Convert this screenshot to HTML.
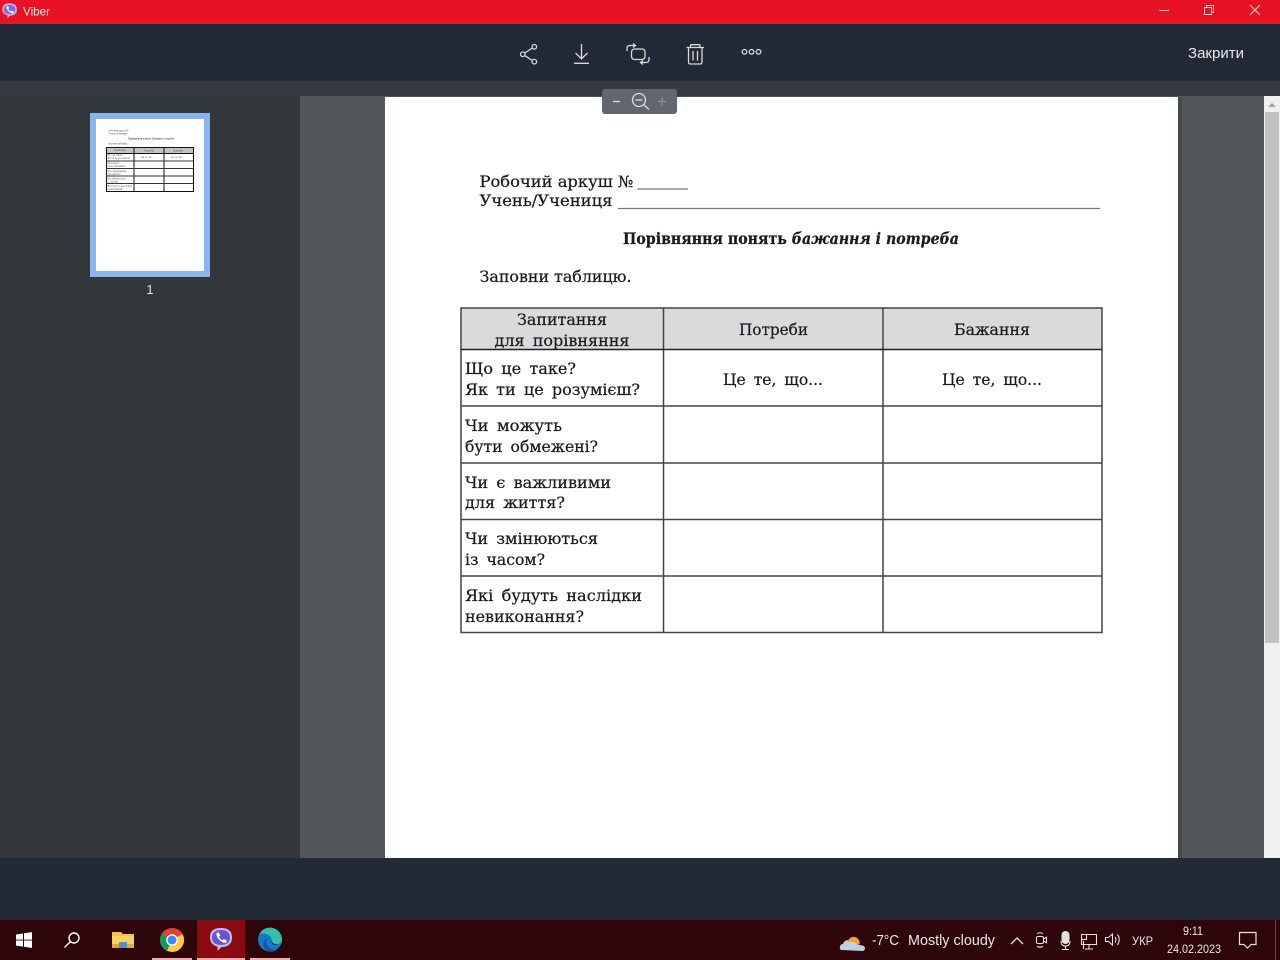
<!DOCTYPE html>
<html lang="uk"><head><meta charset="utf-8"><title>Viber</title>
<style>
html,body{margin:0;padding:0;background:#222a37;width:1280px;height:960px;overflow:hidden}
svg{display:block;position:absolute;left:0;top:0}
.d{font-family:"DejaVu Serif","Liberation Serif",serif;font-size:15.5px;fill:#1a1a1c;stroke:#1a1a1c;stroke-width:.22px}
.t{word-spacing:3px}
.m{font-family:"DejaVu Serif","Liberation Serif",serif;font-size:3px;fill:#555}
.u{font-family:"Liberation Sans",sans-serif;fill:#e8e8e8}
</style></head><body>
<svg width="1280" height="960" viewBox="0 0 1280 960" xmlns="http://www.w3.org/2000/svg">
<!-- backgrounds -->
<rect width="1280" height="960" fill="#222a37"/>
<rect width="1280" height="23" fill="#e81224"/>
<rect y="22" width="1280" height="2" fill="#c92433"/>
<rect y="81" width="1280" height="16" fill="#34393d"/>
<rect y="96" width="300" height="762" fill="#33373b"/>
<rect x="300" y="96" width="964" height="762" fill="#52575a"/>
<rect x="1178" y="97" width="4" height="761" fill="#464a4d"/>
<rect x="385" y="97" width="793" height="761" fill="#fff"/>
<rect x="1264" y="96" width="16" height="762" fill="#f0f0f0"/>
<rect x="1265" y="112" width="14" height="531" fill="#c2c2c2"/>
<path d="M1268 107l4-4 4 4z" fill="#a5a5a5"/>
<rect y="920" width="1280" height="40" fill="#2e0609"/>

<!-- title bar -->
<path d="M9.500 3.200c4.200 0 7.400 1.700 7.400 6.400 0 4.200-2.900 6-6.800 6l-2.600 2.600v-2.900c-3-.8-5.200-2.400-5.200-5.700 0-4.700 3-6.400 7.200-6.400z" fill="#c4b2f7"/>
<path d="M9.500 5c3.300 0 5.700 1.200 5.700 4.600 0 3.300-2.300 4.500-5.700 4.500-3.300 0-5.700-1.200-5.700-4.500 0-3.400 2.400-4.600 5.700-4.600z" fill="#8069db"/>
<path d="M6.500 6.500l1.500-.5 1.200 2-1 1c.6 1.300 1.300 2 2.600 2.600l1-1 2 1.200-.5 1.500c-3.300.4-7.200-3.500-6.800-6.800z" fill="#fff"/>
<text class="u" x="23" y="15.500" font-size="12" textLength="27" lengthAdjust="spacingAndGlyphs" fill="#f8dfe1">Viber</text>
<g stroke="#f6d5d8" fill="none" stroke-width="1">
<path d="M1159 10.500h10"/>
<path d="M1204.500 7.500h7v7h-7zM1206.500 7.500v-2h7v7h-2"/>
<path d="M1250 5l10 10M1260 5l-10 10"/>
</g>

<!-- toolbar icons -->
<g fill="none" stroke="#d8dadd" stroke-width="1.300">
<circle cx="534.300" cy="46.800" r="2.300"/><circle cx="522.800" cy="54.300" r="2.300"/><circle cx="534.300" cy="61.700" r="2.300"/>
<path d="M524.800 53l7.500-5M524.800 55.600l7.500 5"/>
<path d="M581.500 44v14.500M575.500 53l6 5.800 6-5.800M574 63.300h15"/>
<rect x="631.500" y="49" width="13.500" height="10.500" rx="3"/>
<path d="M627 51v-2.500q0-3 3-3h5M633 43.500l2.500 2-2.500 2M649 57v2.500q0 3-3 3h-5M643 60.500l-2.500 2 2.500 2"/>
<path d="M686.500 47.500h17.500M690.500 47.500v-1.800q0-1 1-1h7.500q1 0 1 1v1.800M688.500 48v14q0 2 2 2h9.500q2 0 2-2v-14M693 51v9.500M697.500 51v9.500"/>
<circle cx="744.500" cy="51.800" r="2.300"/><circle cx="751.500" cy="51.800" r="2.300"/><circle cx="758.500" cy="51.800" r="2.300"/>
</g>
<text class="u" x="1188" y="58" font-size="15" textLength="56" lengthAdjust="spacingAndGlyphs" fill="#d5d8dc">Закрити</text>

<!-- thumbnail -->
<rect x="90" y="113" width="120" height="164" fill="#8ab4f0"/>
<rect x="96" y="119" width="108" height="152" fill="#fff"/>
<rect x="107" y="148" width="86" height="5" fill="#c4c4c4"/>
<g class="m">
<text x="108.500" y="131.500" textLength="20" lengthAdjust="spacingAndGlyphs">Робочий аркуш №</text>
<text x="108.500" y="134.500" textLength="19" lengthAdjust="spacingAndGlyphs">Учень/Учениця</text>
<text x="128" y="139.500" textLength="46" lengthAdjust="spacingAndGlyphs" font-weight="bold">Порівняння понять бажання і потреба</text>
<text x="108" y="144.500" textLength="20" lengthAdjust="spacingAndGlyphs">Заповни таблицю.</text>
<text x="114" y="151" textLength="12" lengthAdjust="spacingAndGlyphs">Запитання</text>
<text x="144" y="151.500" textLength="10" lengthAdjust="spacingAndGlyphs">Потреби</text>
<text x="173" y="151.500" textLength="10" lengthAdjust="spacingAndGlyphs">Бажання</text>
<text x="107.500" y="156" textLength="15" lengthAdjust="spacingAndGlyphs">Що це таке?</text>
<text x="107.500" y="159" textLength="23" lengthAdjust="spacingAndGlyphs">Як ти це розумієш?</text>
<text x="141" y="158" textLength="13" lengthAdjust="spacingAndGlyphs">Це те, що...</text>
<text x="171" y="158" textLength="13" lengthAdjust="spacingAndGlyphs">Це те, що...</text>
<text x="107.500" y="164" textLength="12" lengthAdjust="spacingAndGlyphs">Чи можуть</text>
<text x="107.500" y="167" textLength="18" lengthAdjust="spacingAndGlyphs">бути обмежені?</text>
<text x="107.500" y="172" textLength="19" lengthAdjust="spacingAndGlyphs">Чи є важливими</text>
<text x="107.500" y="175" textLength="13" lengthAdjust="spacingAndGlyphs">для життя?</text>
<text x="107.500" y="179.500" textLength="18" lengthAdjust="spacingAndGlyphs">Чи змінюються</text>
<text x="107.500" y="182.500" textLength="11" lengthAdjust="spacingAndGlyphs">із часом?</text>
<text x="107.500" y="187" textLength="24" lengthAdjust="spacingAndGlyphs">Які будуть наслідки</text>
<text x="107.500" y="190" textLength="16" lengthAdjust="spacingAndGlyphs">невиконання?</text>
</g>
<g stroke="#111" fill="none" stroke-width="1">
<rect x="106.500" y="147.500" width="87" height="44"/>
<path d="M134 147.500v44M164 147.500v44M106.500 153.500h87"/>
<path d="M106.500 161h87M106.500 168.500h87M106.500 176h87M106.500 183.500h87" stroke="#333"/>
</g>
<text class="u" x="150" y="294" font-size="13" text-anchor="middle" fill="#fff">1</text>

<!-- document -->
<rect x="461" y="308" width="641" height="41" fill="#d9dadc"/>
<g class="d">
<text x="479.500" y="187" textLength="154" lengthAdjust="spacingAndGlyphs">Робочий аркуш №</text>
<text x="479.500" y="206" textLength="133" lengthAdjust="spacingAndGlyphs">Учень/Учениця</text>
<text x="623" y="244" textLength="336" lengthAdjust="spacingAndGlyphs" font-weight="bold">Порівняння понять <tspan font-style="italic">бажання і потреба</tspan></text>
<text x="479.500" y="282" textLength="152" lengthAdjust="spacingAndGlyphs">Заповни таблицю.</text>
</g>
<g class="d t">
<text x="517" y="325" textLength="90" lengthAdjust="spacingAndGlyphs">Запитання</text>
<text x="494.500" y="346" textLength="135" lengthAdjust="spacingAndGlyphs">для порівняння</text>
<text x="739" y="335" textLength="69" lengthAdjust="spacingAndGlyphs">Потреби</text>
<text x="954" y="335" textLength="76" lengthAdjust="spacingAndGlyphs">Бажання</text>
<text x="465" y="374" textLength="111" lengthAdjust="spacingAndGlyphs">Що це таке?</text>
<text x="465" y="395" textLength="175" lengthAdjust="spacingAndGlyphs">Як ти це розумієш?</text>
<text x="723" y="385" textLength="100" lengthAdjust="spacingAndGlyphs">Це те, що...</text>
<text x="942" y="385" textLength="100" lengthAdjust="spacingAndGlyphs">Це те, що...</text>
<text x="465" y="431" textLength="97" lengthAdjust="spacingAndGlyphs">Чи можуть</text>
<text x="465" y="452" textLength="133" lengthAdjust="spacingAndGlyphs">бути обмежені?</text>
<text x="465" y="488" textLength="146" lengthAdjust="spacingAndGlyphs">Чи є важливими</text>
<text x="465" y="508" textLength="100" lengthAdjust="spacingAndGlyphs">для життя?</text>
<text x="465" y="544" textLength="133" lengthAdjust="spacingAndGlyphs">Чи змінюються</text>
<text x="465" y="565" textLength="80" lengthAdjust="spacingAndGlyphs">із часом?</text>
<text x="465" y="601" textLength="177" lengthAdjust="spacingAndGlyphs">Які будуть наслідки</text>
<text x="465" y="622" textLength="119" lengthAdjust="spacingAndGlyphs">невиконання?</text>
</g>
<path d="M637.500 189h50.500M618 208.500h482" stroke="#777" stroke-width="1.300" fill="none"/>
<g fill="none" stroke="#444" stroke-width="1.500">
<rect x="461" y="308" width="641" height="324.500"/>
<path d="M663.500 308v324.500M883 308v324.500"/>
<path d="M461 406h641M461 463h641M461 519.500h641M461 576h641"/>
<path d="M461 349.500h641" stroke="#222"/>
</g>

<!-- zoom control -->
<rect x="602" y="89" width="75" height="25" rx="3" fill="#62676f"/>
<g fill="none" stroke="#dcdde0" stroke-width="1.300">
<path d="M613 101.500h7"/>
<circle cx="639" cy="100" r="6.500"/><path d="M635.500 100h7M644 105l5 4.500"/>
<path d="M658 101.500h8M662 97.500v8" stroke="#8b8f96"/>
</g>

<!-- taskbar -->
<g fill="#fff">
<path d="M16 934.500l7-1v6.100h-7zM24 933.300l8-1.200v7.500h-8zM16 940.500h7v6.100l-7-1zM24 940.500h8v7.500l-8-1.200z"/>
</g>
<g fill="none" stroke="#fff" stroke-width="1.400"><circle cx="74" cy="938" r="5"/><path d="M70.500 941.500l-6 6"/></g>
<!-- folder -->
<path d="M112 932h9l2 2h11v6h-22z" fill="#f0c24f"/>
<path d="M112 936h22v12h-22z" fill="#f7d367"/>
<path d="M112 944h22v4h-22z" fill="#e5a93a"/>
<rect x="119" y="942" width="8" height="6" fill="#4d8fc9"/>
<!-- chrome -->
<circle cx="172" cy="940" r="12" fill="#db4437"/>
<path d="M172 940l-10.400-6-0 .1a12 12 0 0 0 5.400 16.800l5-10.900z" fill="#0f9d58"/>
<path d="M172 928a12 12 0 0 1 10.400 6H172z" fill="#db4437"/>
<path d="M172 940l10.400-6a12 12 0 0 1-10.400 18l-5 -1.100z" fill="#ffcd40"/>
<circle cx="172" cy="940" r="5.800" fill="#fff"/><circle cx="172" cy="940" r="4.500" fill="#4285f4"/>
<!-- viber active -->
<rect x="197" y="920" width="48" height="40" fill="#8a0a12"/>
<path d="M221 928c6.500 0 11 2.400 11 9.500 0 7-4.700 9.500-10.500 9.500l-4 3.800v-4.200c-4.500-1.200-7.500-3.900-7.500-9.100 0-7.100 4.500-9.500 11-9.500z" fill="#c9baf7"/>
<path d="M221 930c5 0 9 1.800 9 7.500 0 5.400-3.800 7.500-9 7.500-5.200 0-9-2.100-9-7.500 0-5.700 4-7.500 9-7.500z" fill="#6a55cf"/>
<path d="M216.500 933l2-.6 1.800 3-1.300 1.300c.8 1.800 1.800 2.800 3.600 3.600l1.300-1.300 3 1.800-.6 2c-4.700.6-10.400-5.100-9.800-9.800z" fill="#fff"/>
<!-- edge -->
<circle cx="270" cy="939.500" r="12" fill="#1b78c8"/>
<path d="M259.500 934a12 12 0 0 1 22.500 5.500c0 3-2.500 4.500-5 4.500-3 0-5-1.200-5-3 0-4-4-7.500-8-7.500-2 0-3.500 .3-4.500 .5z" fill="#35c1a6"/>
<path d="M272 941c0 2 2.500 3.500 5 3.500 1 0 2-.3 3-.8-1.500 1-4 1.800-6 1.300-2-.5-3-2.500-2-4z" fill="#0f2f66"/>
<path d="M269 951.500c-4-1-6.500-5-5.500-9 .5-2.500 2.500-4 5-4.500-3 2-3 6 0 9 2 2 5 3 8.500 3-2.500 1.500-5 2-8 1.500z" fill="#1654a8"/>
<rect x="152" y="958" width="40" height="2" fill="#f7a8ad"/>
<rect x="197" y="958" width="48" height="2" fill="#f7a8ad"/>
<rect x="250" y="958" width="40" height="2" fill="#f7a8ad"/>
<rect x="1275" y="920" width="1" height="40" fill="#6a4a4c"/>
<!-- tray -->
<path d="M842 950c-3 0-3-6 1-6 1-4 6-5 8-2 4-1 6 1 7 3 4 0 7 1 7 3s-1 3-3 3z" fill="#bcd0e8"/>
<path d="M848 942c0-5 7-7 10-3 2 2 2 4 1 6l-5-3z" fill="#f2a33c"/>
<g class="u" font-size="14.500">
<text x="872" y="945" textLength="27" lengthAdjust="spacingAndGlyphs">-7°C</text>
<text x="908" y="945" textLength="87" lengthAdjust="spacingAndGlyphs">Mostly cloudy</text>
</g>
<g fill="none" stroke="#e4e0e0" stroke-width="1.100">
<path d="M1011 944l6-6 6 6" stroke-width="1.300"/>
<rect x="1036.500" y="936.500" width="7" height="7" rx="1.500"/>
<path d="M1043.500 939l3-1.800v5.600l-3-1.800M1037 933.500q3-1.500 6 0M1037 946.500q3 1.500 6 0"/>
<path d="M1061 941q0 5 4.500 5t4.500-5M1065.500 946v3M1062 949.500h7"/>
<path d="M1081.500 934.500h5v5h-5zM1086.500 934.500h10v10h-15v-5M1089 944.500v4M1085 949h8M1083.500 941v8"/>
<path d="M1105.500 937.500h3l4-3.500v11l-4-3.500h-3zM1115 937q2 2.500 0 5.500M1117.500 934.500q3.500 5 0 10.500"/>
<path d="M1239.500 932.500h16.500v12h-5l-3.500 3.500-3.500-3.500h-4.500z" stroke-width="1.200"/>
</g>
<rect x="1061.500" y="931" width="8" height="13" rx="4" fill="#e4e0e0"/>
<g class="u" font-size="12">
<text x="1132" y="945" textLength="21" lengthAdjust="spacingAndGlyphs">УКР</text>
<text x="1183" y="935" textLength="20" lengthAdjust="spacingAndGlyphs">9:11</text>
<text x="1167" y="953" textLength="54" lengthAdjust="spacingAndGlyphs">24.02.2023</text>
</g>
</svg>
</body></html>
